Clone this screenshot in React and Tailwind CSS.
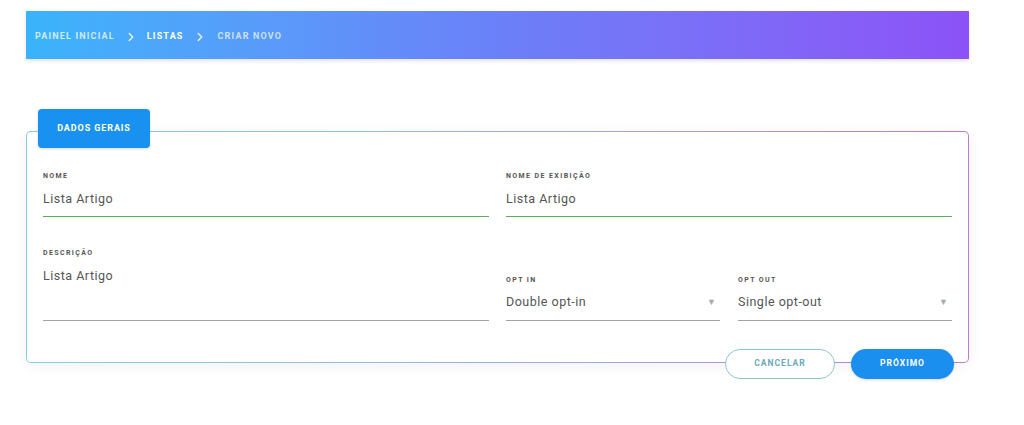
import { ChevronRight } from "lucide-react";

function Field({ label, value, underline = "bg-[#a2a2a8]", children }) {
  return (
    <div className="flex flex-col">
      <span className="text-[7px] font-bold uppercase tracking-[0.2em] text-[#555]">
        {label}
      </span>
      <div className="mt-[8px] flex items-center justify-between">
        <span className="text-[12.5px] tracking-[0.04em] text-[#555]">{value}</span>
        {children}
      </div>
      <div className={`mt-[8px] h-px ${underline}`} />
    </div>
  );
}

function SelectArrow() {
  return <span className="mr-[4px] text-[9px] leading-none text-[#aaa]">▼</span>;
}

export default function App() {
  return (
    <main
      className="min-h-screen bg-white pt-[11px]"
      style={{ fontFamily: "Roboto, 'Liberation Sans', sans-serif" }}
    >
      <div className="ml-[26px] w-[943px]">
        <nav className="flex h-[48px] items-center gap-[9px] bg-gradient-to-r from-[#38b4fb] via-[#6a80f8] to-[#8c52f7] pl-[9px] pt-[3px] text-[9px] font-bold uppercase tracking-[0.13em] shadow-[0_2px_4px_rgba(0,0,0,0.12)]">
          <span className="text-white/75">Painel inicial</span>
          <ChevronRight size={14} strokeWidth={2.5} className="text-white/85" />
          <span className="text-white">Listas</span>
          <ChevronRight size={14} strokeWidth={2.5} className="text-white/85" />
          <span className="ml-[2px] text-white/70">Criar novo</span>
        </nav>

        <div className="mt-[50px]">
          <div className="relative z-10 ml-[12px] -mb-[17px] flex h-[39px] w-[112px] items-center justify-center rounded-[4px] bg-[#1991f0] text-[9px] font-bold uppercase tracking-[0.1em] text-white shadow-[0_1px_3px_rgba(0,0,0,0.15)]">
            Dados gerais
          </div>

          <div className="rounded-[5px] bg-gradient-to-r from-[#7fd2e2] via-[#9db0d8] to-[#b77bd2] p-px shadow-[0_3px_14px_rgba(0,0,0,0.06)]">
            <div className="rounded-[4px] bg-white px-[16px] pb-[41px] pt-[39px]">
              <div className="grid grid-cols-2 gap-x-[17px]">
                <Field label="Nome" value="Lista Artigo" underline="bg-[#5cae5f]" />
                <Field label="Nome de exibição" value="Lista Artigo" underline="bg-[#5cae5f]" />
              </div>

              <div className="mt-[31px] grid grid-cols-2 items-end gap-x-[17px]">
                <div className="flex flex-col">
                  <span className="text-[7px] font-bold uppercase tracking-[0.2em] text-[#555]">
                    Descrição
                  </span>
                  <span className="mt-[8px] h-[45px] text-[12.5px] tracking-[0.04em] text-[#555]">
                    Lista Artigo
                  </span>
                  <div className="mt-[8px] h-px bg-[#a2a2a8]" />
                </div>
                <div className="grid grid-cols-2 gap-x-[18px]">
                  <Field label="Opt in" value="Double opt-in">
                    <SelectArrow />
                  </Field>
                  <Field label="Opt out" value="Single opt-out">
                    <SelectArrow />
                  </Field>
                </div>
              </div>
            </div>
          </div>

          <div className="relative -mt-[14px] mr-[15px] flex justify-end gap-[16px]">
            <button className="h-[30px] w-[110px] rounded-full border border-[#8cc6d4] bg-white text-[8.5px] font-bold uppercase tracking-[0.12em] text-[#6aa9ba]">
              Cancelar
            </button>
            <button className="h-[30px] w-[103px] rounded-full bg-[#1a8ff0] text-[8.5px] font-bold uppercase tracking-[0.12em] text-white shadow-[0_1px_3px_rgba(0,0,0,0.15)]">
              Próximo
            </button>
          </div>
        </div>
      </div>
    </main>
  );
}
